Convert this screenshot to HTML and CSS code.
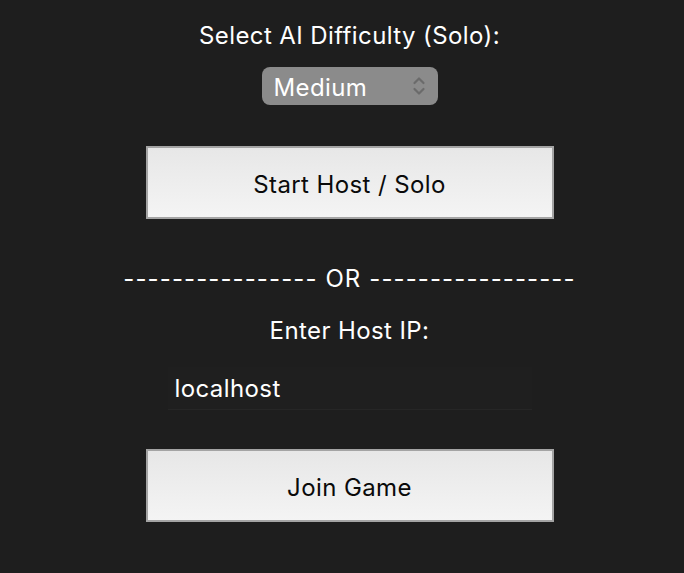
FILE: index.html
```html
<!DOCTYPE html>
<html lang="en">

<head>
    <meta charset="UTF-8">
    <meta name="viewport" content="width=device-width, initial-scale=1.0">
    <title>Game Lobby</title>
    <link rel="stylesheet" href="styles.css">
</head>

<body>
    <div class="lobby">
        <label class="caption" for="difficulty">Select AI Difficulty (Solo):</label>
        <div class="select-wrap">
            <select id="difficulty" name="difficulty">
                <option value="easy">Easy</option>
                <option value="medium" selected>Medium</option>
                <option value="hard">Hard</option>
            </select>
            <svg class="chevrons" width="14" height="22" viewBox="0 0 14 22">
                <path d="M2.5 8 L7 3.5 L11.5 8" fill="none" stroke="#6b6b6b" stroke-width="2.2" stroke-linecap="round" stroke-linejoin="round"/>
                <path d="M2.5 14 L7 18.5 L11.5 14" fill="none" stroke="#6b6b6b" stroke-width="2.2" stroke-linecap="round" stroke-linejoin="round"/>
            </svg>
        </div>

        <button type="button" class="big-btn host-btn">Start Host / Solo</button>

        <div class="divider">---------------- OR -----------------</div>

        <label class="caption ip-caption" for="hostIp">Enter Host IP:</label>
        <input type="text" id="hostIp" name="hostIp" value="localhost">

        <button type="button" class="big-btn join-btn">Join Game</button>
    </div>
</body>

</html>
```

FILE: styles.css
```css
body {
    margin: 0;
    background-color: #1e1e1e;
    font-family: Inter, "Open Sans", sans-serif;
    color: #fff;
    height: 100vh;
}

.lobby {
    display: flex;
    flex-direction: column;
    align-items: center;
    padding-top: 20px;
    padding-left: 15px;
}

.caption {
    font-size: 24px;
    line-height: 32px;
    letter-spacing: 0.4px;
}

.select-wrap {
    position: relative;
    margin-top: 15px;
    width: 176px;
    height: 38px;
}

.select-wrap select {
    appearance: none;
    -webkit-appearance: none;
    width: 100%;
    height: 100%;
    border: none;
    border-radius: 8px;
    background-color: #8b8b8b;
    color: #fff;
    font-family: inherit;
    font-size: 24px;
    letter-spacing: 0.4px;
    padding: 3px 0 0 12px;
    outline: none;
}

.chevrons {
    position: absolute;
    right: 12px;
    top: 8px;
    pointer-events: none;
}

.big-btn {
    width: 408px;
    height: 73px;
    border: 2px solid #a4a4a4;
    background: linear-gradient(#e7e7e7, #f4f4f4);
    color: #0a0a0a;
    font-family: inherit;
    font-size: 24px;
    letter-spacing: 0.4px;
    padding-top: 4px;
    cursor: pointer;
}

.host-btn {
    margin-top: 41px;
}

.divider {
    margin-top: 44px;
    font-size: 24px;
    line-height: 32px;
    letter-spacing: 1.1px;
}

.ip-caption {
    margin-top: 20px;
}

#hostIp {
    margin-top: 20px;
    width: 364px;
    height: 43px;
    box-sizing: border-box;
    background-color: #1f1f1f;
    border: none;
    border-bottom: 1px solid #262626;
    color: #fff;
    font-family: inherit;
    font-size: 24px;
    letter-spacing: 0.4px;
    padding: 0 7px;
    outline: none;
}

.join-btn {
    margin-top: 39px;
}
```
